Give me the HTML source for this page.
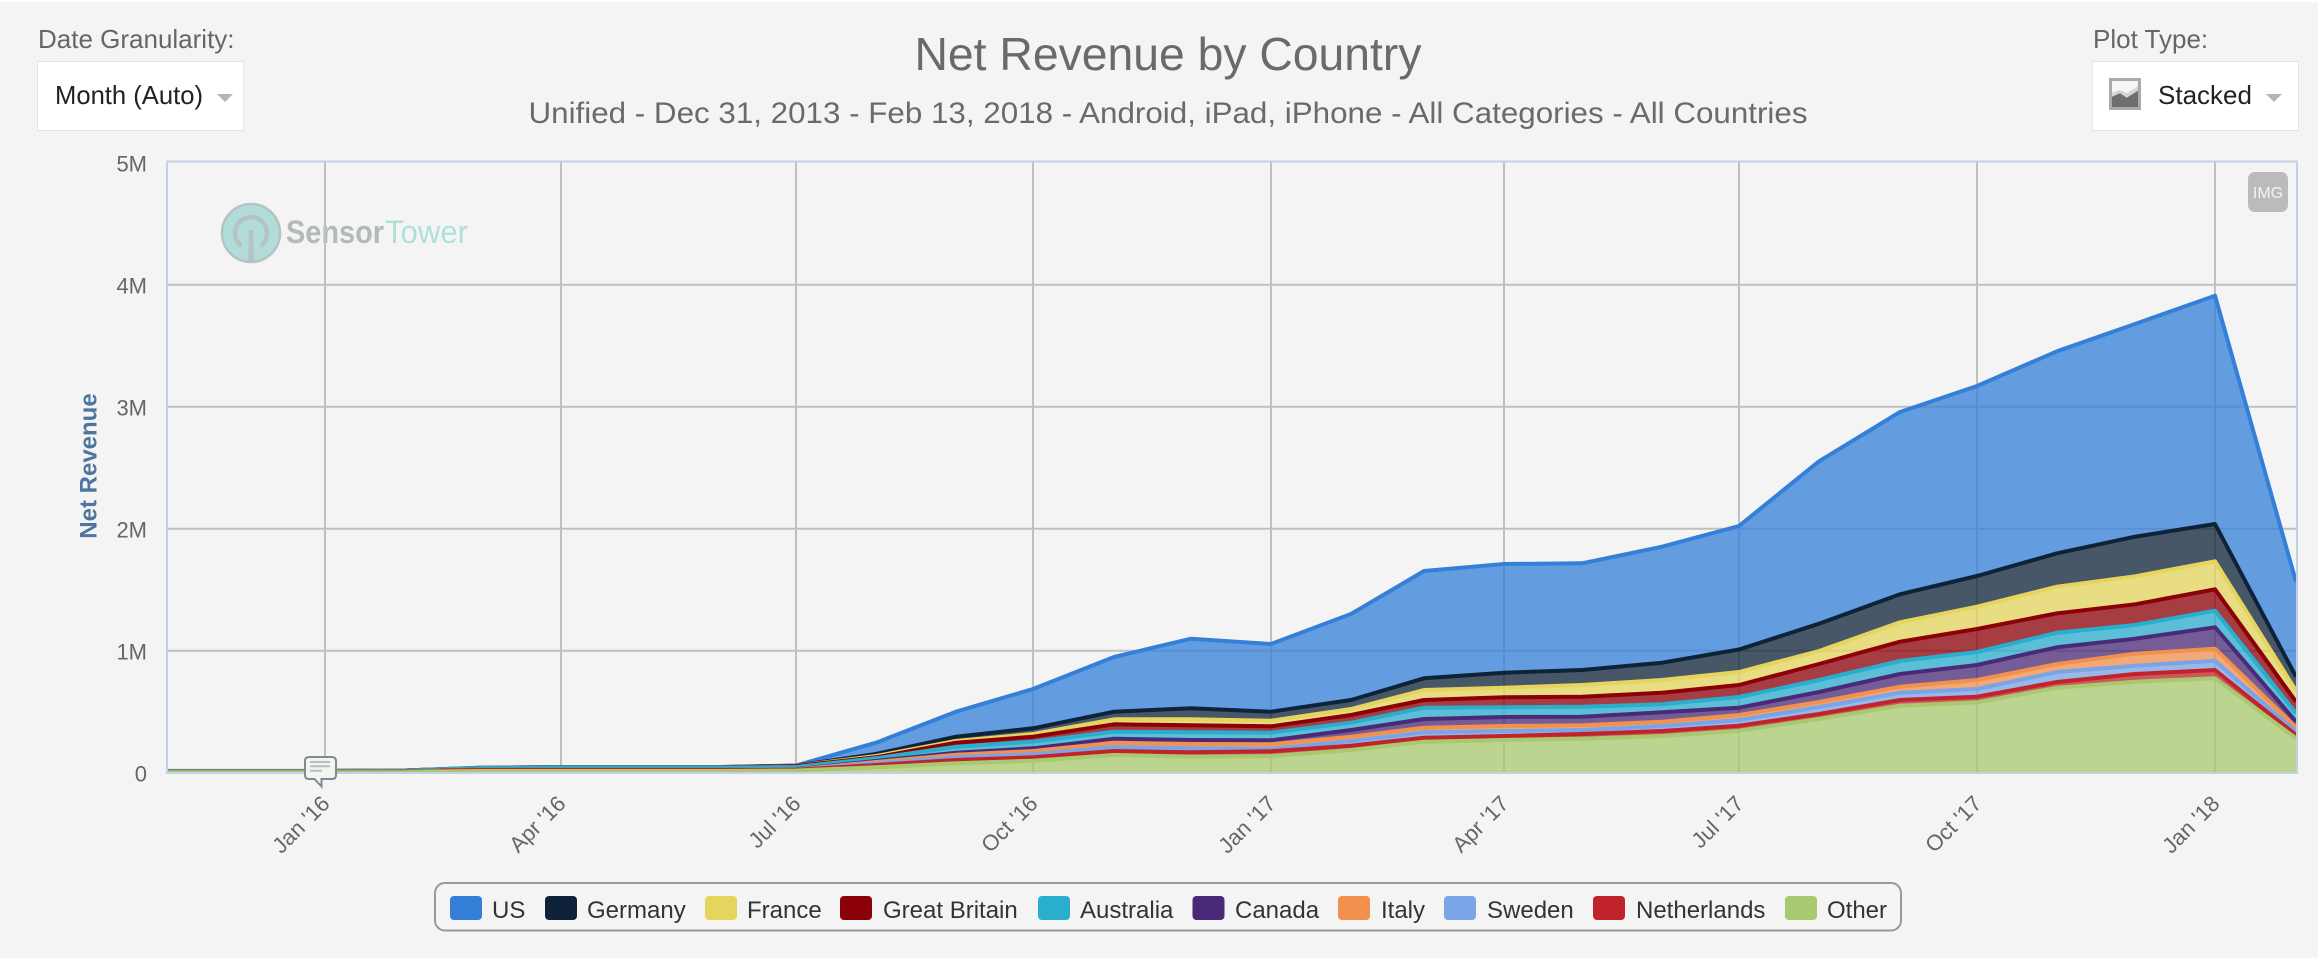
<!DOCTYPE html>
<html>
<head>
<meta charset="utf-8">
<title>Net Revenue by Country</title>
<style>
html,body{margin:0;padding:0;background:#f4f4f4;width:2318px;height:958px;overflow:hidden}
svg{display:block}
text{font-family:"Liberation Sans",Arial,sans-serif}
.ax{font-size:22px;fill:#666}
.lg{font-size:24px;fill:#333}
.xl{font-size:22px;fill:#666;text-anchor:end}
.b{fill-rule:evenodd;fill-opacity:.75;stroke:none}
.l{fill:none;stroke-width:4;stroke-linejoin:round}
</style>
</head>
<body>
<svg width="2318" height="958" viewBox="0 0 2318 958" xmlns="http://www.w3.org/2000/svg">
<defs><clipPath id="pc"><rect x="168" y="161" width="2128" height="611"/></clipPath></defs>
<rect width="2318" height="958" fill="#f4f4f4"/>
<rect width="2318" height="2" fill="#fff"/>

<!-- Header -->
<text x="38" y="48" font-size="26" fill="#666">Date Granularity:</text>
<rect x="37" y="61" width="207" height="70" fill="#e6e6e6"/>
<rect x="38" y="62" width="205" height="68" fill="#fff"/>
<text x="55" y="104" font-size="26" fill="#222" textLength="148" lengthAdjust="spacingAndGlyphs">Month (Auto)</text>
<polygon points="217,94 233,94 225,102" fill="#b5b5b5"/>

<text x="1168" y="70" font-size="46" fill="#6a6a6a" text-anchor="middle" textLength="507" lengthAdjust="spacingAndGlyphs">Net Revenue by Country</text>
<text x="1168" y="123" font-size="30" fill="#6a6a6a" text-anchor="middle" textLength="1279" lengthAdjust="spacingAndGlyphs">Unified - Dec 31, 2013 - Feb 13, 2018 - Android, iPad, iPhone - All Categories - All Countries</text>

<text x="2093" y="48" font-size="26" fill="#666">Plot Type:</text>
<rect x="2092" y="61" width="207" height="70" fill="#e6e6e6"/>
<rect x="2093" y="62" width="205" height="68" fill="#fff"/>
<rect x="2110.500" y="79.500" width="29" height="29" fill="#f6f6f6" stroke="#aaa" stroke-width="3"/>
<polygon points="2112,92.700 2120,90 2126.700,93.300 2138,86 2138,92 2126.700,98 2120,94 2112,97" fill="#d5d5d5"/>
<polygon points="2112,96.700 2120,93.300 2126.700,97.700 2138,90.700 2138,107 2112,107" fill="#6e6e6e"/>
<text x="2158" y="104" font-size="26" fill="#222">Stacked</text>
<polygon points="2266,94 2282,94 2274,102" fill="#b5b5b5"/>

<!-- Logo -->
<circle cx="251" cy="233" r="29" fill="#b1dcd9" stroke="#b5c3c2" stroke-width="2.500"/>
<path d="M241.500 246 A16 16 0 1 1 260.500 246" fill="none" stroke="#b5c3c2" stroke-width="4.500"/>
<polygon points="249,230 253,230 254,262 248,262" fill="#b5c3c2"/>
<text x="286" y="243" font-size="32" font-weight="bold" fill="#b2baba" textLength="98" lengthAdjust="spacingAndGlyphs">Sensor</text>
<text x="385" y="243" font-size="32" fill="#b1dfdb" textLength="83" lengthAdjust="spacingAndGlyphs">Tower</text>

<!-- Grid -->
<g stroke="#c0c0c0" stroke-width="2">
<path d="M168 284.700H2296M168 406.700H2296M168 528.700H2296M168 650.700H2296"/>
<path d="M325 162V772M561 162V772M796 162V772M1033 162V772M1271 162V772M1504 162V772M1739 162V772M1977 162V772M2215 162V772"/>
</g>

<!-- Stacked series -->
<g clip-path="url(#pc)">
<path class="b" fill="#3480d8" d="M167 771L245 771 325 771 405 770.5 480 767.7 560 767 638 767 718 767 796 765.5 876 742.7 956 711.7 1033 689 1114 657 1191 638.7 1271 644 1351 614 1424 571 1504 564 1582 563.3 1662 546.7 1739 526 1819 461.3 1900 412 1977 386 2057 351.3 2135 324 2215 295.7 2296 581.7V773H167ZM167 771L245 771 325 771 405 770.5 480 767.7 560 767.1 638 767.1 718 767.1 796 765.7 876 754 956 736.7 1033 728.3 1114 711.7 1191 708.3 1271 711.7 1351 700 1424 678.3 1504 672.7 1582 670 1662 662.7 1739 649.5 1819 623.7 1900 594.3 1977 576 2057 553.3 2135 536.7 2215 524 2296 676.7V773H167Z"/>
<path class="b" fill="#0e2339" d="M167 771L245 771 325 771 405 770.5 480 767.7 560 767.1 638 767.1 718 767.1 796 765.7 876 754 956 736.7 1033 728.3 1114 711.7 1191 708.3 1271 711.7 1351 700 1424 678.3 1504 672.7 1582 670 1662 662.7 1739 649.5 1819 623.7 1900 594.3 1977 576 2057 553.3 2135 536.7 2215 524 2296 676.7V773H167ZM167 771L245 771 325 771 405 770.5 480 767.8 560 767.2 638 767.2 718 767.2 796 765.9 876 756 956 741 1033 734 1114 719.3 1191 719.3 1271 720.7 1351 709 1424 690 1504 687.7 1582 685 1662 680 1739 672 1819 651 1900 622.3 1977 606.7 2057 586.7 2135 576.3 2215 561.3 2296 690.7V773H167Z"/>
<path class="b" fill="#e5d55f" d="M167 771L245 771 325 771 405 770.5 480 767.8 560 767.2 638 767.2 718 767.2 796 765.9 876 756 956 741 1033 734 1114 719.3 1191 719.3 1271 720.7 1351 709 1424 690 1504 687.7 1582 685 1662 680 1739 672 1819 651 1900 622.3 1977 606.7 2057 586.7 2135 576.3 2215 561.3 2296 690.7V773H167ZM167 771L245 771 325 771 405 770.5 480 767.9 560 767.3 638 767.3 718 767.3 796 766 876 757.3 956 742.7 1033 736.7 1114 724.3 1191 725.3 1271 726.3 1351 715 1424 700 1504 697.3 1582 696.7 1662 692.7 1739 685 1819 664 1900 641.7 1977 629 2057 613.3 2135 604.3 2215 589.3 2296 701.7V773H167Z"/>
<path class="b" fill="#8c0008" d="M167 771L245 771 325 771 405 770.5 480 767.9 560 767.3 638 767.3 718 767.3 796 766 876 757.3 956 742.7 1033 736.7 1114 724.3 1191 725.3 1271 726.3 1351 715 1424 700 1504 697.3 1582 696.7 1662 692.7 1739 685 1819 664 1900 641.7 1977 629 2057 613.3 2135 604.3 2215 589.3 2296 701.7V773H167ZM167 771L245 771 325 771 405 770.5 480 768 560 767.5 638 767.5 718 767.5 796 767 876 758.3 956 746.7 1033 741.7 1114 731.7 1191 732.3 1271 732.7 1351 722.7 1424 707.7 1504 707.3 1582 706.7 1662 704.3 1739 697 1819 680 1900 661 1977 652 2057 632.7 2135 625 2215 610.7 2296 713.3V773H167Z"/>
<path class="b" fill="#29aecd" d="M167 771L245 771 325 771 405 770.5 480 768 560 767.5 638 767.5 718 767.5 796 767 876 758.3 956 746.7 1033 741.7 1114 731.7 1191 732.3 1271 732.7 1351 722.7 1424 707.7 1504 707.3 1582 706.7 1662 704.3 1739 697 1819 680 1900 661 1977 652 2057 632.7 2135 625 2215 610.7 2296 713.3V773H167ZM167 771L245 771 325 771 405 770.7 480 769.8 560 769.8 638 769.8 718 769.8 796 769.2 876 761 956 752.7 1033 748.3 1114 738.7 1191 740 1271 740.3 1351 730 1424 719 1504 717 1582 716.7 1662 712.3 1739 707.7 1819 692 1900 674 1977 665 2057 647.3 2135 638.7 2215 627.3 2296 721.7V773H167Z"/>
<path class="b" fill="#4a2a78" d="M167 771L245 771 325 771 405 770.7 480 769.8 560 769.8 638 769.8 718 769.8 796 769.2 876 761 956 752.7 1033 748.3 1114 738.7 1191 740 1271 740.3 1351 730 1424 719 1504 717 1582 716.7 1662 712.3 1739 707.7 1819 692 1900 674 1977 665 2057 647.3 2135 638.7 2215 627.3 2296 721.7V773H167ZM167 771L245 771 325 771 405 770.7 480 769.9 560 769.9 638 769.9 718 769.9 796 769.5 876 762 956 754.7 1033 751 1114 742.7 1191 744 1271 744.3 1351 736.7 1424 727.7 1504 726 1582 725.3 1662 721.7 1739 715 1819 702 1900 686.7 1977 680 2057 664 2135 653.7 2215 648.7 2296 727.3V773H167Z"/>
<path class="b" fill="#f2904e" d="M167 771L245 771 325 771 405 770.7 480 769.9 560 769.9 638 769.9 718 769.9 796 769.5 876 762 956 754.7 1033 751 1114 742.7 1191 744 1271 744.3 1351 736.7 1424 727.7 1504 726 1582 725.3 1662 721.7 1739 715 1819 702 1900 686.7 1977 680 2057 664 2135 653.7 2215 648.7 2296 727.3V773H167ZM167 771L245 771 325 771 405 770.7 480 769.9 560 769.9 638 769.9 718 769.9 796 769.6 876 763.3 956 757.3 1033 754.3 1114 747 1191 748.3 1271 748.7 1351 741 1424 732.3 1504 731 1582 730 1662 726 1739 720 1819 707 1900 692.7 1977 689 2057 672 2135 665.7 2215 660.7 2296 731.7V773H167Z"/>
<path class="b" fill="#7aa4e5" d="M167 771L245 771 325 771 405 770.7 480 769.9 560 769.9 638 769.9 718 769.9 796 769.6 876 763.3 956 757.3 1033 754.3 1114 747 1191 748.3 1271 748.7 1351 741 1424 732.3 1504 731 1582 730 1662 726 1739 720 1819 707 1900 692.7 1977 689 2057 672 2135 665.7 2215 660.7 2296 731.7V773H167ZM167 771L245 771 325 771 405 770.8 480 770 560 770 638 770 718 770 796 769.7 876 765 956 760 1033 757.3 1114 751 1191 752.3 1271 751.3 1351 745.7 1424 737.7 1504 736 1582 734 1662 731 1739 725.7 1819 714 1900 700 1977 696.7 2057 682 2135 674 2215 670 2296 735V773H167Z"/>
<path class="b" fill="#c0242a" d="M167 771L245 771 325 771 405 770.8 480 770 560 770 638 770 718 770 796 769.7 876 765 956 760 1033 757.3 1114 751 1191 752.3 1271 751.3 1351 745.7 1424 737.7 1504 736 1582 734 1662 731 1739 725.7 1819 714 1900 700 1977 696.7 2057 682 2135 674 2215 670 2296 735V773H167ZM167 772L245 772 325 772 405 771.8 480 771 560 771 638 771 718 771 796 770.5 876 767.3 956 763.3 1033 760.7 1114 755 1191 756.7 1271 756 1351 750 1424 741.7 1504 740 1582 738.7 1662 736 1739 730.7 1819 719 1900 705.7 1977 702.3 2057 687.7 2135 681.7 2215 678.3 2296 738.3V773H167Z"/>
<path class="b" fill="#a8c96f" d="M167 772L245 772 325 772 405 771.8 480 771 560 771 638 771 718 771 796 770.5 876 767.3 956 763.3 1033 760.7 1114 755 1191 756.7 1271 756 1351 750 1424 741.7 1504 740 1582 738.7 1662 736 1739 730.7 1819 719 1900 705.7 1977 702.3 2057 687.7 2135 681.7 2215 678.3 2296 738.3V773H167Z"/>

<path class="l" stroke="#3480d8" d="M167 771L245 771 325 771 405 770.5 480 767.7 560 767 638 767 718 767 796 765.5 876 742.7 956 711.7 1033 689 1114 657 1191 638.7 1271 644 1351 614 1424 571 1504 564 1582 563.3 1662 546.7 1739 526 1819 461.3 1900 412 1977 386 2057 351.3 2135 324 2215 295.7 2296 581.7"/>
<path class="l" stroke="#0e2339" d="M167 771L245 771 325 771 405 770.5 480 767.7 560 767.1 638 767.1 718 767.1 796 765.7 876 754 956 736.7 1033 728.3 1114 711.7 1191 708.3 1271 711.7 1351 700 1424 678.3 1504 672.7 1582 670 1662 662.7 1739 649.5 1819 623.7 1900 594.3 1977 576 2057 553.3 2135 536.7 2215 524 2296 676.7"/>
<path class="l" stroke="#e5d55f" d="M167 771L245 771 325 771 405 770.5 480 767.8 560 767.2 638 767.2 718 767.2 796 765.9 876 756 956 741 1033 734 1114 719.3 1191 719.3 1271 720.7 1351 709 1424 690 1504 687.7 1582 685 1662 680 1739 672 1819 651 1900 622.3 1977 606.7 2057 586.7 2135 576.3 2215 561.3 2296 690.7"/>
<path class="l" stroke="#8c0008" d="M167 771L245 771 325 771 405 770.5 480 767.9 560 767.3 638 767.3 718 767.3 796 766 876 757.3 956 742.7 1033 736.7 1114 724.3 1191 725.3 1271 726.3 1351 715 1424 700 1504 697.3 1582 696.7 1662 692.7 1739 685 1819 664 1900 641.7 1977 629 2057 613.3 2135 604.3 2215 589.3 2296 701.7"/>
<path class="l" stroke="#29aecd" d="M167 771L245 771 325 771 405 770.5 480 768 560 767.5 638 767.5 718 767.5 796 767 876 758.3 956 746.7 1033 741.7 1114 731.7 1191 732.3 1271 732.7 1351 722.7 1424 707.7 1504 707.3 1582 706.7 1662 704.3 1739 697 1819 680 1900 661 1977 652 2057 632.7 2135 625 2215 610.7 2296 713.3"/>
<path class="l" stroke="#4a2a78" d="M167 771L245 771 325 771 405 770.7 480 769.8 560 769.8 638 769.8 718 769.8 796 769.2 876 761 956 752.7 1033 748.3 1114 738.7 1191 740 1271 740.3 1351 730 1424 719 1504 717 1582 716.7 1662 712.3 1739 707.7 1819 692 1900 674 1977 665 2057 647.3 2135 638.7 2215 627.3 2296 721.7"/>
<path class="l" stroke="#f2904e" d="M167 771L245 771 325 771 405 770.7 480 769.9 560 769.9 638 769.9 718 769.9 796 769.5 876 762 956 754.7 1033 751 1114 742.7 1191 744 1271 744.3 1351 736.7 1424 727.7 1504 726 1582 725.3 1662 721.7 1739 715 1819 702 1900 686.7 1977 680 2057 664 2135 653.7 2215 648.7 2296 727.3"/>
<path class="l" stroke="#7aa4e5" d="M167 771L245 771 325 771 405 770.7 480 769.9 560 769.9 638 769.9 718 769.9 796 769.6 876 763.3 956 757.3 1033 754.3 1114 747 1191 748.3 1271 748.7 1351 741 1424 732.3 1504 731 1582 730 1662 726 1739 720 1819 707 1900 692.7 1977 689 2057 672 2135 665.7 2215 660.7 2296 731.7"/>
<path class="l" stroke="#c0242a" d="M167 771L245 771 325 771 405 770.8 480 770 560 770 638 770 718 770 796 769.7 876 765 956 760 1033 757.3 1114 751 1191 752.3 1271 751.3 1351 745.7 1424 737.7 1504 736 1582 734 1662 731 1739 725.7 1819 714 1900 700 1977 696.7 2057 682 2135 674 2215 670 2296 735"/>
<path class="l" stroke="#a8c96f" d="M167 772L245 772 325 772 405 771.8 480 771 560 771 638 771 718 771 796 770.5 876 767.3 956 763.3 1033 760.7 1114 755 1191 756.7 1271 756 1351 750 1424 741.7 1504 740 1582 738.7 1662 736 1739 730.7 1819 719 1900 705.7 1977 702.3 2057 687.7 2135 681.7 2215 678.3 2296 738.3"/>
<path d="M168 769.6H405L440 768.6" fill="none" stroke="#6f8080" stroke-width="1.5"/>
</g>

<!-- Plot border -->
<rect x="167" y="161.500" width="2130" height="611.500" fill="none" stroke="#c3d2e3" stroke-width="2"/>

<!-- Y axis -->
<text class="ax" x="147" y="171.700" text-anchor="end">5M</text>
<text class="ax" x="147" y="293.700" text-anchor="end">4M</text>
<text class="ax" x="147" y="415.700" text-anchor="end">3M</text>
<text class="ax" x="147" y="537.700" text-anchor="end">2M</text>
<text class="ax" x="147" y="659.700" text-anchor="end">1M</text>
<text class="ax" x="147" y="781.700" text-anchor="end">0</text>
<text x="96.500" y="466" font-size="24" font-weight="bold" fill="#4d759e" text-anchor="middle" transform="rotate(-90 96.500 466)">Net Revenue</text>

<!-- X axis -->
<text class="xl" transform="rotate(-45 331 805)" x="331" y="805">Jan '16</text>
<text class="xl" transform="rotate(-45 567 805)" x="567" y="805">Apr '16</text>
<text class="xl" transform="rotate(-45 802 805)" x="802" y="805">Jul '16</text>
<text class="xl" transform="rotate(-45 1039 805)" x="1039" y="805">Oct '16</text>
<text class="xl" transform="rotate(-45 1277 805)" x="1277" y="805">Jan '17</text>
<text class="xl" transform="rotate(-45 1510 805)" x="1510" y="805">Apr '17</text>
<text class="xl" transform="rotate(-45 1745 805)" x="1745" y="805">Jul '17</text>
<text class="xl" transform="rotate(-45 1983 805)" x="1983" y="805">Oct '17</text>
<text class="xl" transform="rotate(-45 2221 805)" x="2221" y="805">Jan '18</text>

<!-- Flag -->
<path d="M309 757H332Q336 757 336 761V775Q336 779 332 779H321.500V786.500L314.500 779H309Q305 779 305 775V761Q305 757 309 757Z" fill="#f3f5ee" stroke="#7b8c96" stroke-width="2"/>
<path d="M310 762H330M310 766.300H330M310 770.700H322" stroke="#b4bfc0" stroke-width="2" fill="none"/>

<!-- IMG button -->
<rect x="2248" y="172" width="40" height="40" rx="7" fill="#bbb"/>
<text x="2268" y="198" font-size="16" fill="#f4f4f4" text-anchor="middle">IMG</text>

<!-- Legend -->
<rect x="435" y="883" width="1466" height="47.500" rx="10" fill="#f4f4f4" stroke="#999" stroke-width="2"/>
<rect x="450" y="896" width="32" height="24" rx="4" fill="#3480d8"/><text class="lg" x="492" y="918">US</text>
<rect x="545" y="896" width="32" height="24" rx="4" fill="#0e2339"/><text class="lg" x="587" y="918">Germany</text>
<rect x="705" y="896" width="32" height="24" rx="4" fill="#e5d55f"/><text class="lg" x="747" y="918">France</text>
<rect x="840" y="896" width="32" height="24" rx="4" fill="#8c0008"/><text class="lg" x="883" y="918">Great Britain</text>
<rect x="1038" y="896" width="32" height="24" rx="4" fill="#29aecd"/><text class="lg" x="1080" y="918">Australia</text>
<rect x="1192.500" y="896" width="32" height="24" rx="4" fill="#4a2a78"/><text class="lg" x="1235" y="918">Canada</text>
<rect x="1338" y="896" width="32" height="24" rx="4" fill="#f2904e"/><text class="lg" x="1381" y="918">Italy</text>
<rect x="1444" y="896" width="32" height="24" rx="4" fill="#7aa4e5"/><text class="lg" x="1487" y="918">Sweden</text>
<rect x="1593" y="896" width="32" height="24" rx="4" fill="#c0242a"/><text class="lg" x="1636" y="918">Netherlands</text>
<rect x="1785" y="896" width="32" height="24" rx="4" fill="#a8c96f"/><text class="lg" x="1827" y="918">Other</text>
</svg>
</body>
</html>
